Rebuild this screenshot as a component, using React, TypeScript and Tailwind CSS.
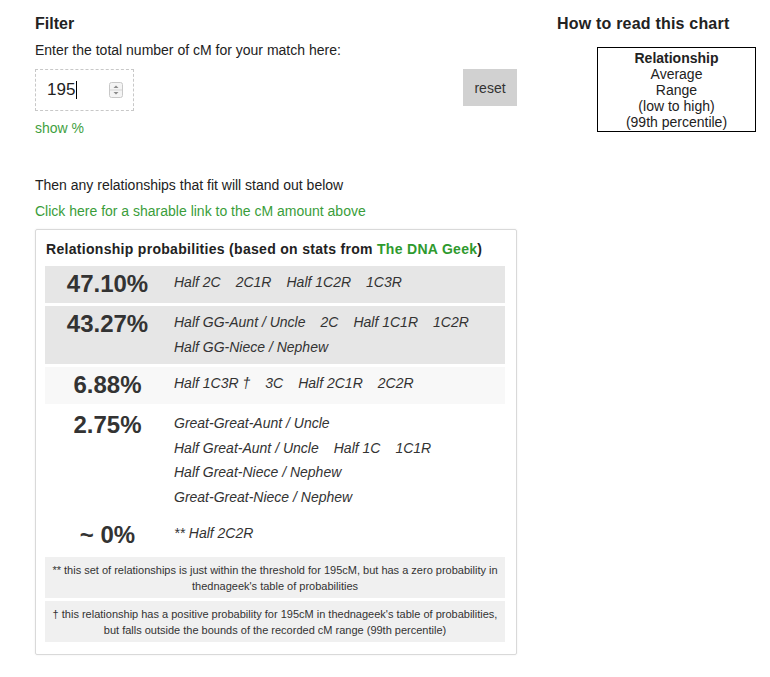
const rows: { pct: string; lines: string[][]; bg: string }[] = [
  { pct: "47.10%", lines: [["Half 2C", "2C1R", "Half 1C2R", "1C3R"]], bg: "bg-[#e6e6e6]" },
  {
    pct: "43.27%",
    lines: [["Half GG-Aunt / Uncle", "2C", "Half 1C1R", "1C2R"], ["Half GG-Niece / Nephew"]],
    bg: "bg-[#e6e6e6]",
  },
  { pct: "6.88%", lines: [["Half 1C3R \u2020", "3C", "Half 2C1R", "2C2R"]], bg: "bg-[#f8f8f8]" },
  {
    pct: "2.75%",
    lines: [
      ["Great-Great-Aunt / Uncle"],
      ["Half Great-Aunt / Uncle", "Half 1C", "1C1R"],
      ["Half Great-Niece / Nephew"],
      ["Great-Great-Niece / Nephew"],
    ],
    bg: "bg-white",
  },
  { pct: "~ 0%", lines: [["** Half 2C2R"]], bg: "bg-white" },
];

const Spinner = () => (
  <svg width="14" height="16" viewBox="0 0 14 16">
    <rect x="0.5" y="0.5" width="13" height="15" rx="2" fill="#f4f4f4" stroke="#c8c8c8" />
    <line x1="1" y1="8" x2="13" y2="8" stroke="#d4d4d4" />
    <path d="M4.5 6 L7 3.5 L9.5 6 Z" fill="#8a8a8a" />
    <path d="M4.5 10 L7 12.5 L9.5 10 Z" fill="#8a8a8a" />
  </svg>
);

const App = () => {
  return (
    <div
      className="flex bg-white text-[#222] w-[770px] h-[677px]"
      style={{ fontFamily: '"Liberation Sans", Arial, sans-serif' }}
    >
      <div className="ml-[35px] w-[482px] pt-[14px]">
        <h3 className="text-[16px] leading-[20px] font-bold">Filter</h3>
        <p className="mt-[7px] text-[14px] leading-[18px]">Enter the total number of cM for your match here:</p>
        <div className="mt-[10px] flex items-start justify-between">
          <div className="w-[99px] h-[42px] border border-dashed border-[#c8c8c8] flex items-center pl-[11px] pr-[10px]">
            <span className="text-[17px] leading-[20px]">195</span>
            <span className="w-px h-[18px] bg-black ml-[1px]" />
            <span className="ml-auto flex items-center">
              <Spinner />
            </span>
          </div>
          <button className="w-[54px] h-[37px] bg-[#d1d1d1] text-[14px] leading-[18px] pt-[1px] text-[#333]">
            reset
          </button>
        </div>
        <p className="mt-[8px] text-[14px] leading-[18px] text-[#3f9f3f]">show %</p>
        <p className="mt-[39px] text-[14px] leading-[18px]">Then any relationships that fit will stand out below</p>
        <p className="mt-[8px] text-[14px] leading-[18px] text-[#3a9d3a]">
          Click here for a sharable link to the cM amount above
        </p>
        <div className="mt-[9px] border border-[#d9d9d9] rounded-[2px] shadow-[0_0_2px_rgba(0,0,0,0.08)] pt-[9px] pl-[9px] pr-[11px] pb-[12px]">
          <p className="text-[14px] leading-[20px] font-bold tracking-[0.3px] pl-[1px]">
            Relationship probabilities (based on stats from <span className="text-[#2e9a2e]">The DNA Geek</span>)
          </p>
          <div className="mt-[7px] flex flex-col gap-[3px]">
            {rows.map((r) => (
              <div key={r.pct} className={`flex pt-[4px] pb-[5px] ${r.bg}`}>
                <div className="w-[125px] shrink-0 text-center text-[24px] leading-[28px] font-bold text-[#333]">
                  {r.pct}
                </div>
                <div className="pl-[4px] text-[14px] italic text-[#333] leading-[24.5px]">
                  {r.lines.map((line, i) => (
                    <div key={i} className="flex gap-x-[15px]">
                      {line.map((t) => (
                        <span key={t}>{t}</span>
                      ))}
                    </div>
                  ))}
                </div>
              </div>
            ))}
            <div className="bg-[#f0f0f0] text-center text-[11px] leading-[16px] text-[#333] pt-[5px] pb-[4px] px-[6px]">
              ** this set of relationships is just within the threshold for 195cM, but has a zero probability in
              thednageek's table of probabilities
            </div>
            <div className="bg-[#f0f0f0] text-center text-[11px] leading-[16px] text-[#333] pt-[5px] pb-[4px] px-[6px]">
              {"\u2020"} this relationship has a positive probability for 195cM in thednageek's table of probabilities,
              but falls outside the bounds of the recorded cM range (99th percentile)
            </div>
          </div>
        </div>
      </div>
      <div className="ml-[40px] pt-[14px]">
        <h3 className="text-[16px] leading-[20px] font-bold tracking-[0.2px]">How to read this chart</h3>
        <div className="mt-[13px] ml-[40px] w-[159px] border border-black text-center text-[14px] leading-[16px] text-[#222] pt-[2px] pb-[1px]">
          <div className="font-bold">Relationship</div>
          <div>Average</div>
          <div>Range</div>
          <div>(low to high)</div>
          <div>(99th percentile)</div>
        </div>
      </div>
    </div>
  );
};

export default App;
